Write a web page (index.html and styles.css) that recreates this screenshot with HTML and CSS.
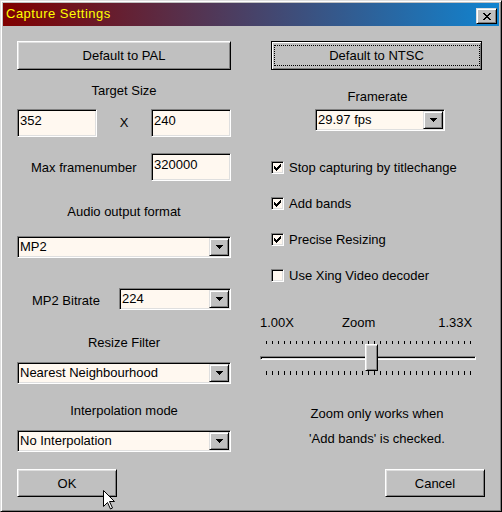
FILE: index.html
```html
<!DOCTYPE html>
<html lang="en">
<head>
    <meta charset="UTF-8">
    <title>Capture Settings</title>
    <link rel="stylesheet" href="styles.css">
</head>
<body>
    <div class="window">
        <div class="titlebar">
            <span class="title">Capture Settings</span>
            <button class="close" type="button" aria-label="Close">
                <svg width="8" height="7" viewBox="0 0 8 7" shape-rendering="crispEdges">
                    <path d="M0 0h2v1h-2z M6 0h2v1h-2z M1 1h2v1h-2z M5 1h2v1h-2z M2 2h4v1h-4z M3 3h2v1h-2z M2 4h4v1h-4z M1 5h2v1h-2z M5 5h2v1h-2z M0 6h2v1h-2z M6 6h2v1h-2z" fill="#000"/>
                </svg>
            </button>
        </div>

        <div class="client">
            <!-- left column -->
            <div class="col">
                <button type="button" class="btn btn-preset">Default to PAL</button>

                <div class="caption cap-target">Target Size</div>
                <div class="size-row">
                    <input class="edit" type="text" value="352">
                    <span class="times">X</span>
                    <input class="edit" type="text" value="240">
                </div>

                <div class="field-row row-maxframe">
                    <span class="field-label">Max framenumber</span>
                    <input class="edit" type="text" value="320000">
                </div>

                <div class="caption cap-audio">Audio output format</div>
                <div class="combo combo-audio">
                    <span class="combo-text">MP2</span>
                    <span class="combo-btn"><svg width="7" height="4" viewBox="0 0 7 4" shape-rendering="crispEdges"><path d="M0 0h7v1h-7z M1 1h5v1h-5z M2 2h3v1h-3z M3 3h1v1h-1z" fill="#000"/></svg></span>
                </div>

                <div class="field-row row-bitrate">
                    <span class="field-label">MP2 Bitrate</span>
                    <div class="combo combo-bitrate">
                        <span class="combo-text">224</span>
                        <span class="combo-btn"><svg width="7" height="4" viewBox="0 0 7 4" shape-rendering="crispEdges"><path d="M0 0h7v1h-7z M1 1h5v1h-5z M2 2h3v1h-3z M3 3h1v1h-1z" fill="#000"/></svg></span>
                    </div>
                </div>

                <div class="caption cap-resize">Resize Filter</div>
                <div class="combo combo-resize">
                    <span class="combo-text">Nearest Neighbourhood</span>
                    <span class="combo-btn"><svg width="7" height="4" viewBox="0 0 7 4" shape-rendering="crispEdges"><path d="M0 0h7v1h-7z M1 1h5v1h-5z M2 2h3v1h-3z M3 3h1v1h-1z" fill="#000"/></svg></span>
                </div>

                <div class="caption cap-interp">Interpolation mode</div>
                <div class="combo combo-interp">
                    <span class="combo-text">No Interpolation</span>
                    <span class="combo-btn"><svg width="7" height="4" viewBox="0 0 7 4" shape-rendering="crispEdges"><path d="M0 0h7v1h-7z M1 1h5v1h-5z M2 2h3v1h-3z M3 3h1v1h-1z" fill="#000"/></svg></span>
                </div>

                <button type="button" class="btn btn-ok">OK</button>
            </div>

            <!-- right column -->
            <div class="col">
                <button type="button" class="btn btn-preset btn-default">Default to NTSC</button>

                <div class="caption cap-framerate">Framerate</div>
                <div class="combo combo-framerate">
                    <span class="combo-text">29.97 fps</span>
                    <span class="combo-btn"><svg width="7" height="4" viewBox="0 0 7 4" shape-rendering="crispEdges"><path d="M0 0h7v1h-7z M1 1h5v1h-5z M2 2h3v1h-3z M3 3h1v1h-1z" fill="#000"/></svg></span>
                </div>

                <div class="check-list">
                    <label class="check-row">
                        <span class="check"><svg width="7" height="7" viewBox="0 0 7 7" shape-rendering="crispEdges"><path d="M6 0h1v1h-1z M5 1h2v1h-2z M0 2h1v1h-1z M4 2h3v1h-3z M0 3h2v1h-2z M3 3h3v1h-3z M0 4h5v1h-5z M1 5h3v1h-3z M2 6h1v1h-1z" fill="#000"/></svg></span>
                        Stop capturing by titlechange
                    </label>
                    <label class="check-row">
                        <span class="check"><svg width="7" height="7" viewBox="0 0 7 7" shape-rendering="crispEdges"><path d="M6 0h1v1h-1z M5 1h2v1h-2z M0 2h1v1h-1z M4 2h3v1h-3z M0 3h2v1h-2z M3 3h3v1h-3z M0 4h5v1h-5z M1 5h3v1h-3z M2 6h1v1h-1z" fill="#000"/></svg></span>
                        Add bands
                    </label>
                    <label class="check-row">
                        <span class="check"><svg width="7" height="7" viewBox="0 0 7 7" shape-rendering="crispEdges"><path d="M6 0h1v1h-1z M5 1h2v1h-2z M0 2h1v1h-1z M4 2h3v1h-3z M0 3h2v1h-2z M3 3h3v1h-3z M0 4h5v1h-5z M1 5h3v1h-3z M2 6h1v1h-1z" fill="#000"/></svg></span>
                        Precise Resizing
                    </label>
                    <label class="check-row">
                        <span class="check"></span>
                        Use Xing Video decoder
                    </label>
                </div>

                <div class="zoom-labels">
                    <span>1.00X</span>
                    <span class="zoom-mid">Zoom</span>
                    <span class="zoom-max">1.33X</span>
                </div>
                <div class="slider">
                    <div class="ticks"></div>
                    <div class="track"></div>
                    <div class="ticks ticks-bottom"></div>
                    <div class="thumb"></div>
                </div>

                <p class="note">Zoom only works when<br>'Add bands' is checked.</p>

                <button type="button" class="btn btn-cancel">Cancel</button>
            </div>
        </div>

        <!-- mouse pointer resting on OK -->
        <svg class="cursor" width="12" height="20" viewBox="0 0 12 20">
            <path d="M0.5 0.5 V16.5 L4.5 12.5 L7.5 19 L9.5 18 L6.5 11.5 H11.5 Z" fill="#fff" stroke="#000" stroke-width="1"/>
        </svg>
    </div>
</body>
</html>
```

FILE: styles.css
```css
body { margin: 0; width: 502px; height: 512px; overflow: hidden; font-family: "Liberation Sans", Arial, sans-serif; font-size: 13px; color: #000; }

.window { position: relative; box-sizing: border-box; width: 502px; height: 512px; padding: 2px; background: #c0c0c0; border: 1px solid; border-color: #dfdfdf #000 #000 #dfdfdf; box-shadow: inset 1px 1px #fff, inset -1px -1px #808080; }

/* title bar */
.titlebar { display: flex; align-items: flex-end; justify-content: space-between; box-sizing: border-box; height: 23px; padding: 0 2px 2px 3px; background: linear-gradient(to right, #800000, #1084d0); }
.title { align-self: center; color: #ffff00; line-height: 16px; letter-spacing: 0.5px; }
.close { display: flex; align-items: center; justify-content: center; box-sizing: border-box; width: 21px; height: 16px; padding: 0; background: #c0c0c0; border: 1px solid; border-color: #dfdfdf #000 #000 #dfdfdf; box-shadow: inset 1px 1px #fff, inset -1px -1px #808080; }

/* two columns */
.client { display: grid; grid-template-columns: 214px 228px; column-gap: 27px; padding: 15px 0 0 14px; }
.col { display: block; }

/* buttons */
.btn { position: relative; display: block; box-sizing: border-box; padding: 0; font: inherit; color: #000; background: #c0c0c0; border: 1px solid; border-color: #fff #000 #000 #fff; box-shadow: inset 1px 1px #dfdfdf, inset -1px -1px #808080; }
.btn-preset { width: 214px; height: 29px; }
.btn-default { width: 211px; margin-left: 13px; border-color: #000; box-shadow: inset 1px 1px #fff, inset -1px -1px #808080; }
.btn-default::after { content: ""; position: absolute; top: 3px; left: 2px; right: 1px; bottom: 3px; border: 1px dotted #000; }
.btn-ok { width: 100px; height: 28px; margin-top: 17px; }
.btn-cancel { width: 100px; height: 28px; margin: 18px 0 0 127px; }

/* captions */
.caption { line-height: 16px; text-align: center; }
.cap-target { margin-top: 13px; }
.cap-audio { margin-top: 23px; }
.cap-resize { margin-top: 25px; }
.cap-interp { margin-top: 19px; }
.cap-framerate { margin-top: 19px; padding-left: 11px; }

/* edit boxes */
.edit { box-sizing: border-box; width: 80px; height: 28px; margin: 0; padding: 2px 2px 8px; font: inherit; line-height: 16px; color: #000; background: #fff8f0; border: 1px solid; border-color: #808080 #fff #fff #808080; box-shadow: inset 1px 1px #000, inset -1px -1px #dfdfdf; outline: none; }

.size-row { display: flex; align-items: center; justify-content: space-between; margin-top: 10px; }
.times { line-height: 16px; }

.field-row { display: flex; align-items: center; justify-content: space-between; }
.row-maxframe { margin-top: 16px; }
.row-maxframe .field-label { padding-left: 14px; }
.row-bitrate { margin-top: 30px; }
.row-bitrate .field-label { padding: 2px 0 0 15px; }

/* combo boxes */
.combo { display: flex; box-sizing: border-box; height: 22px; padding: 2px; background: #fff8f0; border: 1px solid; border-color: #808080 #fff #fff #808080; box-shadow: inset 1px 1px #000, inset -1px -1px #dfdfdf; }
.combo-text { flex: 1; padding-left: 0; line-height: 16px; white-space: nowrap; }
.combo-btn { display: flex; align-items: center; justify-content: center; box-sizing: border-box; width: 20px; height: 18px; margin: -1px -1px 0 0; background: #c0c0c0; border: 1px solid; border-color: #dfdfdf #000 #000 #dfdfdf; box-shadow: inset 1px 1px #fff, inset -1px -1px #808080; }
.combo-audio { margin-top: 16px; }
.combo-bitrate { width: 112px; }
.combo-resize { margin-top: 11px; }
.combo-interp { margin-top: 11px; }
.combo-framerate { width: 130px; margin: 4px 0 0 57px; }

/* check boxes */
.check-list { display: flex; flex-direction: column; gap: 20px; margin: 28px 0 0 13px; }
.check-row { display: flex; align-items: center; gap: 5px; height: 16px; }
.check { display: block; box-sizing: border-box; width: 13px; height: 13px; padding: 2px; background: #fff8f0; border: 1px solid; border-color: #808080 #fff #fff #808080; box-shadow: inset 1px 1px #000, inset -1px -1px #dfdfdf; }
.check svg { display: block; }

/* zoom slider */
.zoom-labels { display: flex; margin: 32px 0 0 2px; line-height: 16px; }
.zoom-mid { margin-left: 48px; }
.zoom-max { margin-left: 63px; }
.slider { position: relative; width: 216px; margin: 10px 0 0 2px; }
.ticks { width: 205px; height: 3px; margin-left: 6px; background: repeating-linear-gradient(to right, #000 0 1px, transparent 1px 6px); }
.ticks-bottom { height: 4px; margin-top: 11px; }
.track { box-sizing: border-box; height: 4px; margin-top: 12px; background: #dfdfdf; border: 1px solid; border-color: #808080 #fff #fff #808080; box-shadow: inset 1px 1px #000; }
.thumb { position: absolute; left: 105px; top: 3px; box-sizing: border-box; width: 13px; height: 27px; background: #c0c0c0; border: 1px solid; border-color: #fff #000 #000 #fff; box-shadow: inset 1px 1px #dfdfdf, inset -1px -1px #808080; }

.note { margin: 26px 0 0; padding-left: 10px; line-height: 25px; text-align: center; }

.cursor { position: absolute; left: 102px; top: 489px; }
```
